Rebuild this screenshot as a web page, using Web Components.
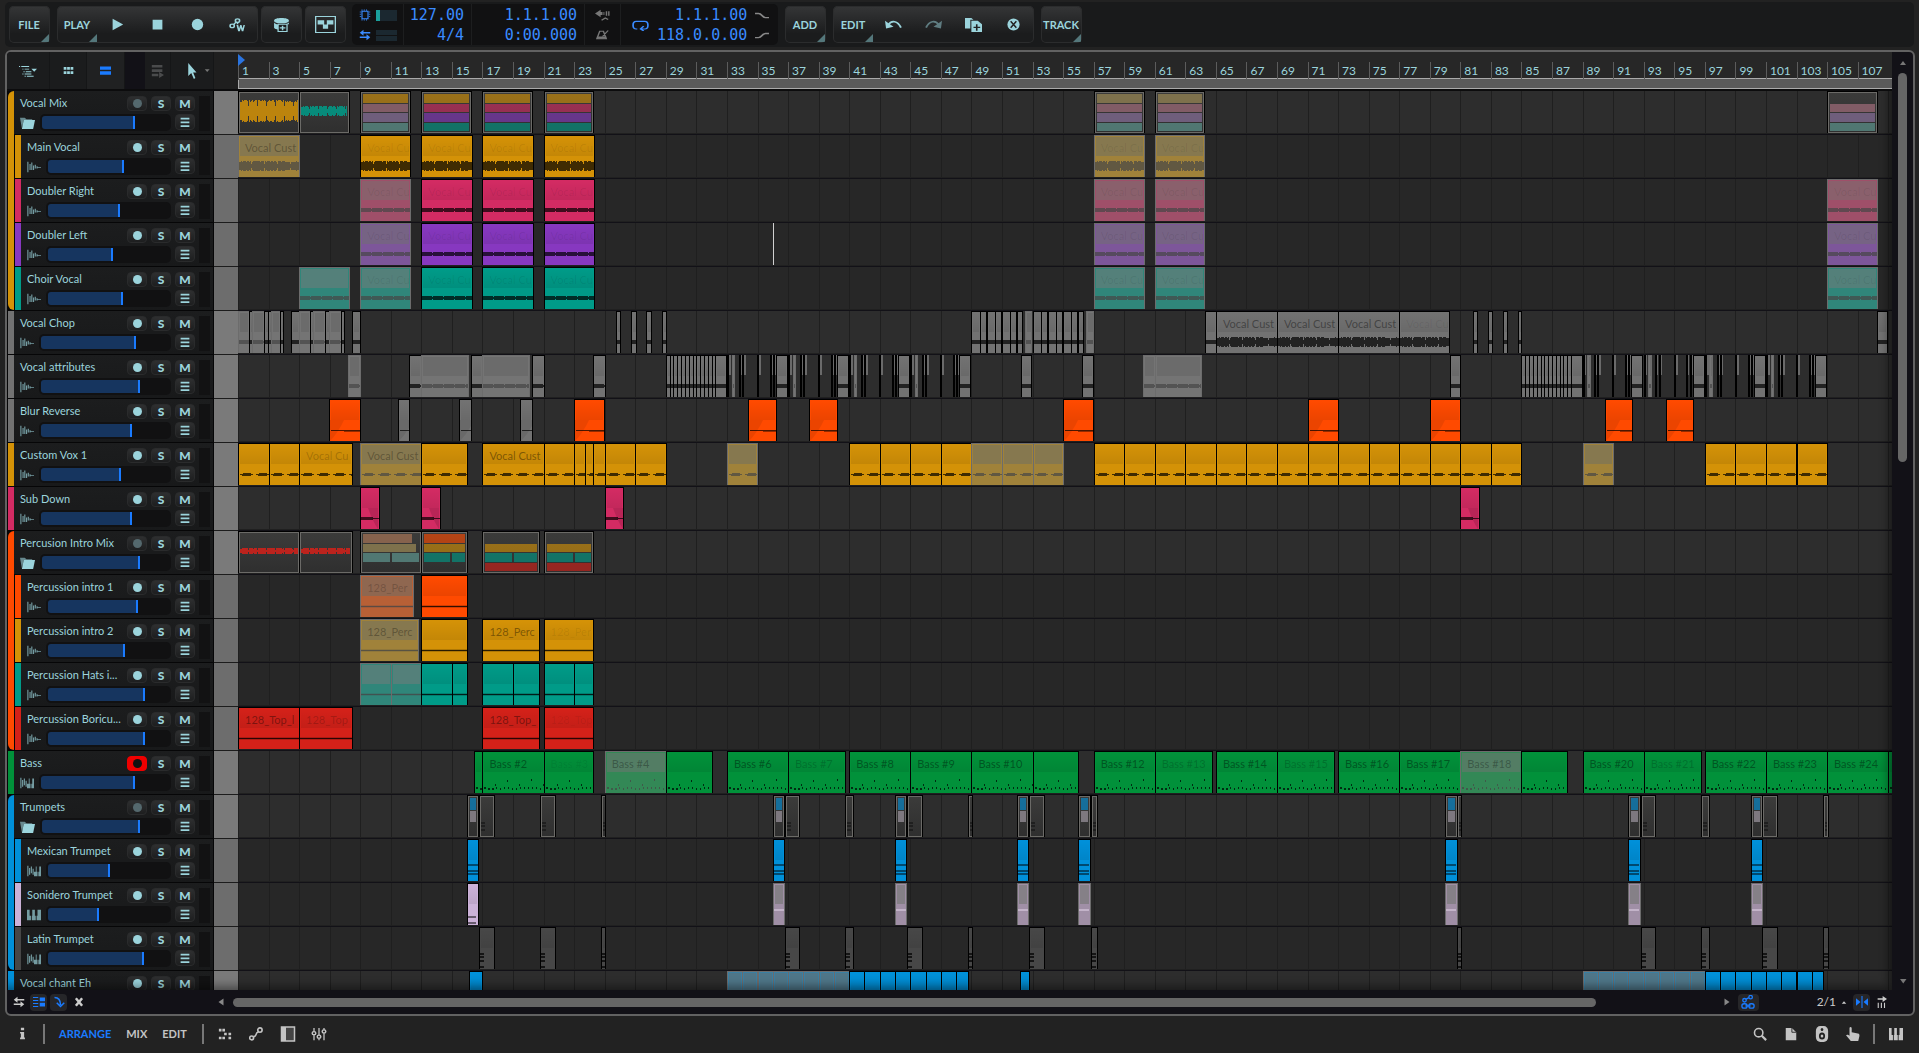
<!DOCTYPE html>
<html lang="en">
<head>
<meta charset="utf-8">
<title>Arranger</title>
<style>
  html, body {
    margin: 0;
    height: 100%;
    background: #222;
    overflow: hidden;
  }

  body {
    --accent: #1a7bff;
    --ink: #9bd4dc;
    --bars: 108.25;
    font: 12px/16px Lato, "Liberation Sans", sans-serif;
    color: var(--ink);
  }
</style>
</head>
<body>
<daw-app></daw-app>

<script>
const ICONS = {
  play: '<path d="M2 1l13 7-13 7z"/>',
  stop: '<path d="M2 2h12v12H2z"/>',
  record: '<circle cx="8" cy="8" r="7"/>',
  write: '<g fill="none" stroke="currentColor" stroke-width="1.500"><circle cx="3" cy="9" r="2"/><circle cx="8" cy="3" r="2"/><path d="M4.300 7.500l2.500-3M8 5v2"/></g><path d="M7 8h1.700l.8 4 1-4h1.300l1 4 .8-4H15l-1.500 7H12l-.9-3.500L10.200 15H8.600z"/>',
  preset: '<path d="M1 3c0-2 3-3 7-3s7 1 7 3-3 3-7 3-7-1-7-3zM1 5c1 2 3 2 4 2.500V13c-2 0-3.500-1-4-2zM15 5c-.5 1-2 1.500-3 2h3z"/><path d="M4.800 7.200h8.400v8.200H4.800z" fill="#1b1d1e" stroke="currentColor" stroke-width="1.200"/><path d="M8.300 8.800h1.400v1.900h2v1.300h-2v1.900H8.300V12h-2v-1.300h2z"/>',
  pattern: '<path d="M.5.500h15v15H.5z" fill="none" stroke="currentColor"/><path d="M2 4h5v4H2zM9 4h5v4H9zM6 8h4v4H6z"/>',
  chip: '<path d="M4 3h8v10H4z" fill="none" stroke="currentColor" stroke-width="1.500"/><path d="M4 .5v2M7 .5v2M10 .5v2M4 13.500v2M7 13.500v2M10 13.500v2M1 4h2M1 7h2M1 10h2M13 4h2M13 7h2M13 10h2" stroke="currentColor"/>',
  swap: '<path d="M6 1v3h9v2H6v3L1 5zM10 7v3H1v2h9v3l5-4z"/>',
  punch: '<path d="M6 1v3h2v4H6v3L0 6zM9 4h1v4H9zM11.500 3h1.500v6h-1.500zM14 3h1.500v6H14z"/><path d="M7 15l4-3 3 2" fill="none" stroke="currentColor" stroke-width="1.500"/>',
  metro: '<path d="M5 3h4l3 10H2zM8 10l6-8" fill="none" stroke="currentColor" stroke-width="1.500"/><path d="M2 10h10v3H2z"/>',
  loop: '<path d="M5 13H4C2 13 1 11 1 7.500S2 2 4 2h8c2 0 3 2 3 5.500S14 13 12 13H8M11 9l-3 4 3 3" fill="none" stroke="currentColor" stroke-width="1.600"/>',
  fadeOut: '<path d="M0 5h4c4 0 4 6 8 6h4" fill="none" stroke="currentColor" stroke-width="2"/>',
  fadeIn: '<path d="M0 11h4c4 0 4-6 8-6h4" fill="none" stroke="currentColor" stroke-width="2"/>',
  undo: '<path d="M3 8c3-6 9-5 12 3" fill="none" stroke="currentColor" stroke-width="1.800"/><path d="M0 3l1 9 7-2z"/>',
  redo: '<path d="M13 8C10 2 4 3 1 11" fill="none" stroke="currentColor" stroke-width="1.800"/><path d="M16 3l-1 9-7-2z"/>',
  duplicate: '<path d="M0 0h6l2 2H5v10H0z"/><path d="M6 3h6l4 4v9H6z"/><path d="M10.300 7v3H8v1.500h2.300v3h1.500v-3h2.500V10h-2.500V7z" fill="#222"/>',
  remove: '<circle cx="8" cy="8" r="7.500"/><path d="M4.500 4l7 8M11.500 4l-7 8" stroke="#222" stroke-width="1.800"/>',
  tree: '<path d="M0 2h9M3 5.500h6M4 9h7M3 12h8M5 15h8" stroke="currentColor" stroke-width="1.300" stroke-dasharray="1 1 20"/><path d="M11 5h5l-2.500 4z"/>',
  grid: '<path d="M1 3h4v4H1zM6 3h4v4H6zM11 3h4v4h-4zM1 9h4v4H1zM6 9h4v4H6zM11 9h4v4h-4z"/>',
  rows: '<path d="M0 2h16v5H0zM0 9h16v5H0z"/>',
  stack: '<path d="M1 1h13v3H1zM1 6h13v3H1zM1 11h8v3H1zM10 9l6 3.500-6 3.500z"/>',
  cursor: '<path d="M3 0l11 9.500H9.500l3 5.500-2 1-3.500-6-4 3z"/>',
  down: '<path d="M2 4h13l-6.500 9z"/>',
  up: '<path d="M2 12h12L8 4z"/>',
  left: '<path d="M13 1v14L3 8z"/>',
  right: '<path d="M3 1v14l10-7z"/>',
  folder: '<path d="M0 1h5l2 2h6v1H4L2 15z" opacity=".6"/><path d="M4 4h12l-2 12H2z"/>',
  audio: '<path d="M1 1v14M3.500 4v8M5.500 2v10M7.500 6v6M9.500 5v5M11.500 7v3M12 8.500h4" stroke="currentColor" stroke-width="1.300"/>',
  hybrid: '<path d="M1 1v14M3 4v9M5 2v9M7 5v8" stroke="currentColor" stroke-width="1.300"/><path d="M8 9h2V2h1v7h1v6H8zM13 15V9h1V2h2v13z"/>',
  keys: '<path d="M0 1h3v8h1.500v6H0zM5.500 15V9H6V1h3v8h1v6zM11 15V9h1V1h4v14z"/>',
  menu: '<path d="M1 1h14v3H1zM1 7h14v3H1zM1 13h14v3H1z"/>',
  tracks: '<path d="M0 2h7M0 6h7M0 10h7M0 14h7" stroke="currentColor" stroke-width="1.500"/><path d="M9 2h7v5H9zM9 9h7v5H9z"/>',
  follow: '<path d="M2 2c6 0 8 3 8 10M5 9l5 5 5-5" fill="none" stroke="currentColor" stroke-width="2"/>',
  close: '<path d="M3 2l10 12M13 2L3 14" stroke="currentColor" stroke-width="4"/>',
  link: '<g fill="none" stroke="currentColor" stroke-width="1.500"><circle cx="4" cy="6" r="2"/><circle cx="11" cy="2.500" r="2"/><path d="M5.500 5l3.500-2"/><rect x="1" y="10" width="6" height="5" rx="2.500"/><rect x="9" y="10" width="6" height="5" rx="2.500"/><path d="M5 12.500h6"/></g>',
  snap: '<path d="M8 0v16" stroke="currentColor" stroke-width="1.500"/><path d="M0 3l6 5-6 5zM16 3l-6 5 6 5z"/>',
  advance: '<path d="M1 3h8V0l7 4-7 4V5H1z"/><path d="M2 9v7M7 9v7M12 9v7" stroke="currentColor" stroke-width="1.800"/>',
  info: '<path d="M6 1h4v3H6zM5 6h5v7h1v2H5v-2h1V8H5z"/>',
  steps: '<path d="M1 2h3v3H1zM5 2h3v3H5zM7 6.500h3v3H7zM12 6.500h3v3h-3zM1 11h3v3H1zM5 11h3v3H5zM12 11h3v3h-3z"/>',
  curve: '<g fill="none" stroke="currentColor" stroke-width="1.800"><circle cx="3" cy="12.500" r="2.200"/><circle cx="12.500" cy="3.500" r="2.500"/><path d="M5 11c5 0 1-4 6-5.500"/></g>',
  device: '<path d="M1.500 1h13v14h-13z" fill="#444" stroke="currentColor" stroke-width="1.500"/><path d="M1 1h5v14H1z"/>',
  faders: '<path d="M3 1v14M8 1v14M13 1v14" stroke="currentColor" stroke-width="1.300"/><g fill="#222" stroke="currentColor" stroke-width="1.500"><circle cx="3" cy="7" r="1.800"/><circle cx="8" cy="11" r="1.800"/><circle cx="13" cy="5" r="1.800"/></g>',
  search: '<circle cx="6.500" cy="6.500" r="4.800" fill="none" stroke="currentColor" stroke-width="1.800"/><path d="M10 10l5 5" stroke="currentColor" stroke-width="2.500"/>',
  file: '<path d="M2 1h7l5 5v9H2z"/><path d="M9 1v5h5" fill="none" stroke="#222"/>',
  speaker: '<rect x="1" y="0" width="14" height="16" rx="5"/><circle cx="8" cy="10" r="3.500" fill="#222"/><circle cx="8" cy="10" r="1.500"/><circle cx="8" cy="3.500" r="1.500" fill="#222"/>',
  hand: '<path d="M5 0c1.500 0 1.500 1 1.500 2v4l7 1.500c2 .3 2 1.500 1.800 3L14 16H5.500L0 9.500C1 8 3 9 4 10V2c0-1 .3-2 1-2z"/>'
}

// Body, muted body and muted head of each track colour
const COLORS = {
  orange: ['#d49207', '#a0823a', '#86784f'],
  pink: ['#d32b63', '#9f4f69', '#8a606c'],
  purple: ['#8738c0', '#7d569a', '#766384'],
  teal: ['#009b88', '#30867a', '#54807a'],
  gray: ['#727272', '#747474', '#6b6b6b'],
  fire: ['#ff4a00', '#b86036', '#8f6750'],
  green: ['#01913a', '#338856', '#537d64'],
  red: ['#d42119', '#a04440', '#8a5a58'],
  blue: ['#0090d9', '#3a7fa3', '#4f7688'],
  lilac: ['#ccb2d8', '#a08fa6', '#858087'],
  dark: ['#474747', '#474747', '#3f3f3f']
}

// A clip is [start bar, end bar, label, flags]
// flags: m muted, f faint label, F barely visible label, g gray, t thin
const take = 'Vocal Cust'
const shortTake = 'Vocal Cu'
const doubled = [
  [9, 12.25, shortTake, 'mF'], [13, 16.3, shortTake, 'F'], [17, 20.3, shortTake, 'F'], [21, 24.3, shortTake, 'F'],
  [57, 60.3, shortTake, 'mF'], [61, 64.25, shortTake, 'mF'], [105, 108.25, shortTake, 'mF']
]

const every = (from, to, step, flags = '') => {
  const clips = []
  for (let bar = from; bar < to; bar += step) {
    clips.push([bar, Math.min(bar + step, to), '', flags])
  }
  return clips
}

const shift = (starts, pattern) =>
  starts.flatMap(at => pattern.map(([a, b, ...rest]) => [at + a, at + b, ...rest]))

const stutter = shift([33, 37, 41, 45, 89, 93, 97, 101], [
  [0, .18, '', 't'], [.3, .46, '', 'm'], [.77, .9, '', 't'], [.97, 1.15, '', 't'],
  [1.95, 2.15, '', 't'], [2.8, 2.93, '', 't'], [3, 3.15, '', 't'], [3.2, 3.92]
])

const trumpetHits = [
  [16, 16.7], [36, 36.75, '', 'm'], [44, 44.75, '', 'm'], [52, 52.7, '', 'm'], [56, 56.75, '', 'm'],
  [80, 80.75, '', 'm'], [92, 92.75, '', 'm'], [100, 100.75, '', 'm']
]

const latinHits = [
  [16.75, 17.75], [20.75, 21.75], [24.77, 25.03], [36.77, 37.73], [40.75, 41.27], [44.77, 45.75],
  [48.77, 49.03], [52.75, 53.75], [56.8, 57.25], [80.77, 81.07], [92.8, 93.75], [96.75, 97.25],
  [100.77, 101.75], [104.75, 105.03]
]

const vocalTiles = ['orange', 'pink', 'purple', 'teal']

const TRACKS = [
  { name: 'Vocal Mix', color: 'orange', group: 'start', icon: 'folder', level: 73, clips: [
    { at: [1, 5], wave: 'orange', amp: 11 }, { at: [5, 8.25], wave: 'teal', amp: 5 },
    { at: [9, 12.25], tiles: ['orange', 'pink m', 'purple m', 'teal m'] },
    { at: [13, 16.25], tiles: vocalTiles }, { at: [17, 20.25], tiles: vocalTiles }, { at: [21, 24.25], tiles: vocalTiles },
    { at: [57, 60.3], tiles: vocalTiles.map(c => c + ' m') }, { at: [61, 64.25], tiles: vocalTiles.map(c => c + ' m') },
    { at: [105, 108.25], tiles: ['', 'pink m', 'purple m', 'teal m'] }
  ] },
  { name: 'Main Vocal', color: 'orange', parent: 'orange', level: 62, content: 'loud', clips: [
    [1, 5, take, 'm'], [9, 12.25, shortTake, 'F'], ...doubled.slice(1, -1)
  ] },
  { name: 'Doubler Right', color: 'pink', parent: 'orange', level: 59, clips: doubled },
  { name: 'Doubler Left', color: 'purple', parent: 'orange', level: 53, playhead: 36, clips: doubled },
  { name: 'Choir Vocal', color: 'teal', parent: 'orange', group: 'end', level: 61, clips: [[5, 8.25, '', 'm'], ...doubled] },
  { name: 'Vocal Chop', color: 'gray', level: 74, clips: [
    [1, 1.72, '', 'm'], [1.72, 1.92], [1.92, 2.7, '', 'm'], [2.7, 2.97], [2.97, 3.18], [3.18, 3.75, '', 'm'], [3.75, 3.97],
    [4.47, 5], [5, 5.72, '', 'm'], [5.72, 5.93], [5.93, 6.72, '', 'm'], [6.72, 6.94], [6.94, 7.75, '', 'm'], [7.75, 7.97], [8.47, 9],
    [25.75, 26.03], [26.75, 27.03], [27.73, 28.03], [28.77, 29],
    ...shift([49, 53], [[0, .55], [.55, .95], [1, 1.53], [1.53, 1.95], [2, 2.5], [2.5, 2.9], [3, 3.3], [3.5, 3.93, '', 'm']]),
    [64.28, 65], [65, 69, take], [69, 73, take], [73, 77, take], [77, 80.25, shortTake, 'F'],
    [81.8, 82.08], [82.8, 83.08], [83.8, 84.07], [84.8, 85], [108.3, 108.9]
  ], content: 'mid', loud: [65, 80] },
  { name: 'Vocal attributes', color: 'gray', level: 77, content: 'mid', clips: [
    [8.2, 9, '', 'm'], [12.2, 13], [13, 16.05, '', 'm'], [16.26, 17], [17, 20.05, '', 'm'], [20.26, 21], [24.26, 25],
    ...every(29, 32.25, .25), [32.25, 32.92], ...stutter,
    [52.26, 52.92], [56.27, 56.95], [60.25, 61, '', 'm'], [61, 64, '', 'm'], [80.3, 81],
    ...every(85, 88.25, .25), [88.25, 88.95]
  ] },
  { name: 'Blur Reverse', color: 'fire', strip: 'gray', level: 71, content: 'rise', clips: [
    [6.95, 9], [11.46, 12.2, '', 'g'], [15.46, 16.25, '', 'g'], [19.46, 20.25, '', 'g'], [23, 24.95], [34.4, 36.2], [38.4, 40.2],
    [55, 56.95], [71, 73], [79, 81], [90.45, 92.25], [94.45, 96.25]
  ] },
  { name: 'Custom Vox 1', color: 'orange', level: 62, content: 'dash', clips: [
    [1, 3], [3, 5], [5, 8.45, shortTake, 'f'], [9, 13, take, 'm'], [13, 16], [17, 21, take], [21, 23], [23, 23.7], [23.7, 24.25], [24.25, 25],
    [25, 27], [27, 29], [33, 35, '', 'm'], ...every(41, 49, 2), ...every(49, 55, 2, 'm'), ...every(57, 85, 2), [89, 91, '', 'm'],
    ...every(97, 105, 2)
  ] },
  { name: 'Sub Down', color: 'pink', level: 71, content: 'fall', clips: [[9, 10.25], [13, 14.25], [25, 26.2], [81, 82.25]] },
  { name: 'Percusion Intro Mix', color: 'fire', group: 'start', icon: 'folder', level: 77, clips: [
    { at: [1, 5], wave: 'red', amp: 3 }, { at: [5, 8.45], wave: 'red', amp: 3 },
    { at: [9, 13], tiles: ['fire m 87', 'orange m 94', 'teal m 48,50', ''] },
    { at: [13, 16], tiles: ['fire', 'orange', 'teal 66,34', ''] },
    { at: [17, 20.7], tiles: ['', 'orange', 'teal 54,46', 'red'] },
    { at: [21, 24.25], tiles: ['', 'orange', 'teal 61,39', 'red'] }
  ] },
  { name: 'Percussion intro 1', color: 'fire', parent: 'fire', level: 74, content: 'line', clips: [[9, 12.45, '128_Per', 'mf'], [13, 16]] },
  { name: 'Percussion intro 2', color: 'orange', parent: 'fire', level: 63, content: 'line', clips: [
    [9, 12.75, '128_Perc', 'm'], [13, 16], [17, 20.7, '128_Perc'], [21, 24.25, '128_Per', 'F']
  ] },
  { name: 'Percussion Hats i...', color: 'teal', parent: 'fire', level: 80, content: 'line', clips: [
    [9, 11, '', 'm'], [11, 13, '', 'm'], [13, 15], [15, 16], [17, 19], [19, 20.7], [21, 23], [23, 24.25]
  ] },
  { name: 'Percussion Boricu...', color: 'red', parent: 'fire', group: 'end', level: 80, content: 'line', clips: [
    [1, 5, '128_Top_l'], [5, 8.45, '128_Top', 'f'], [17, 20.7, '128_Top_'], [21, 24.25, '128_Top', 'F']
  ] },
  { name: 'Bass', color: 'green', icon: 'hybrid', armed: true, level: 73, content: 'notes', clips: [
    [16.46, 17], [17, 21, 'Bass #2'], [21, 24.25, 'Bass #3', 'F'], [25, 29, 'Bass #4', 'm'], [29, 32],
    [33, 37, 'Bass #6'], [37, 40.75, 'Bass #7', 'f'], [41, 45, 'Bass #8'], [45, 49, 'Bass #9'], [49, 53, 'Bass #10'], [53, 56],
    [57, 61, 'Bass #12'], [61, 64.75, 'Bass #13', 'f'], [65, 69, 'Bass #14'], [69, 72.75, 'Bass #15', 'f'], [73, 77, 'Bass #16'],
    [77, 81, 'Bass #17'], [81, 85, 'Bass #18', 'm'], [85, 88], [89, 93, 'Bass #20'], [93, 96.75, 'Bass #21', 'f'],
    [97, 101, 'Bass #22'], [101, 105, 'Bass #23'], [105, 109, 'Bass #24'], [109, 109.3]
  ] },
  { name: 'Trumpets', color: 'blue', group: 'start', icon: 'folder', level: 77, clips: [
    ...trumpetHits.map(([a, b]) => ({ at: [a, b], tiles: ['blue', 'lilac m', ''] })),
    ...latinHits.map(([a, b]) => ({ at: [a, b], hits: true }))
  ] },
  { name: 'Mexican Trumpet', color: 'blue', parent: 'blue', icon: 'hybrid', level: 50, content: 'chord', clips: trumpetHits.map(c => c.slice(0, 2)) },
  { name: 'Sonidero Trumpet', color: 'lilac', parent: 'blue', icon: 'keys', level: 41, content: 'stab', clips: trumpetHits },
  { name: 'Latin Trumpet', color: 'dark', parent: 'blue', group: 'end', icon: 'hybrid', level: 79, content: 'hits', clips: latinHits },
  { name: 'Vocal chant Eh', color: 'blue', level: 70, content: 'line', clips: [
    [16.15, 17], ...every(33, 41, 1, 'm'), ...every(41, 48.75, 1), [52.15, 52.75], ...every(89, 97, 1, 'm'), ...every(97, 104.75, 1)
  ] }
]

class DawElement extends HTMLElement {
  constructor() {
    super()
    this.attachShadow({ mode: 'open' })
  }

  paint(css, html) {
    this.shadowRoot.innerHTML = `<style>*{box-sizing:border-box}button{font:inherit;color:inherit;margin:0;padding:0;border:0;background:none}${css}</style>${html}`
  }
}

class UiIcon extends DawElement {
  connectedCallback() {
    this.paint(`
      :host { display: inline-flex; width: 12px; height: 12px; flex: none; }
      svg { display: block; width: 100%; height: 100%; fill: currentColor; }
    `, `<svg viewBox="0 0 16 16" preserveAspectRatio="none" aria-hidden="true">${ICONS[this.getAttribute('name')]}</svg>`)
  }
}

class ToolGroup extends DawElement {
  connectedCallback() {
    this.paint(`
      :host {
        display: flex;
        padding-right: 1px;
        border-radius: 5px;
        background: linear-gradient(#353637, #1b1c1d 75%);
        box-shadow: inset 0 0 0 1px #2b2c2d;
        overflow: hidden;
      }
      ::slotted(* + *) { border-left: 1px solid #2f3031; }
    `, '<slot></slot>')
  }
}

class ToolButton extends DawElement {
  connectedCallback() {
    this.paint(`
      :host { display: block; width: 40px; height: 37px; flex: none; box-sizing: border-box; }
      :host([off]) { opacity: .5; }
      button {
        position: relative;
        display: grid;
        place-items: center;
        width: 100%;
        height: 100%;
        font-size: 11px;
        font-weight: 700;
      }
      :host([more]) button::after {
        content: "";
        position: absolute;
        right: 0;
        bottom: 1px;
        border: 4px solid #54777b;
        border-top-color: transparent;
        border-left-color: transparent;
      }
    `, `<button aria-label="${this.getAttribute('label') || this.textContent}"><slot></slot></button>`)
  }
}

class TransportDisplay extends DawElement {
  connectedCallback() {
    this.paint(`
      :host {
        display: flex;
        height: 41px;
        background: #111112;
        border-radius: 5px;
        color: #3a8bff;
        font: 15px/20px "DejaVu Sans Mono", monospace;
      }
      div { display: grid; grid-template-rows: 20px 20px; align-items: center; justify-items: end; padding-top: 1px; }
      div + div { border-left: 1px solid #1d1e1f; }
      .meters { width: 51px; grid-template-columns: 12px 21px; gap: 0 5px; justify-content: center; }
      .meters i { width: 21px; height: 11px; background: linear-gradient(90deg, #1aa09c 4px, #1b2830 4px); }
      .meters i + ui-icon + i { background: linear-gradient(#1b2830 5px, #111112 5px 6px, #1b2830 6px); }
      .tempo { width: 68px; padding-right: 7px; }
      .time { width: 113px; padding-right: 7px; }
      .flags { width: 36px; justify-items: center; color: #777; }
      .flags ui-icon { width: 15px; }
      .loop { width: 158px; padding: 1px 12px 0 11px; grid-template-columns: 17px 1fr 14px; gap: 0 8px; }
      .loop ui-icon { width: 14px; height: 11px; color: #888; }
      .loop ui-icon:first-child { grid-row: span 2; width: 17px; height: 11px; color: #3a8bff; }
    `, `
      <div class="meters"><ui-icon name="chip"></ui-icon><i></i><ui-icon name="swap"></ui-icon><i></i></div>
      <div class="tempo"><span>127.00</span><span>4/4</span></div>
      <div class="time"><span>1.1.1.00</span><span>0:00.000</span></div>
      <div class="flags"><ui-icon name="punch"></ui-icon><ui-icon name="metro"></ui-icon></div>
      <div class="loop">
        <ui-icon name="loop"></ui-icon><span>1.1.1.00</span><ui-icon name="fadeOut"></ui-icon>
        <span>118.0.0.00</span><ui-icon name="fadeIn"></ui-icon>
      </div>
    `)
  }
}

class TransportBar extends DawElement {
  connectedCallback() {
    this.paint(`
      :host {
        display: flex;
        align-items: center;
        height: 45px;
        margin: 2px 5px 3px;
        padding: 0 4px;
        background: #191a1b;
        border-radius: 5px;
      }
      transport-display { margin: 0 7px 0 6px; }
      .gap { margin-left: 7px; }
      .near { margin-left: 3px; }
      ui-icon { width: 13px; height: 13px; }
      .wide { width: 17px; height: 14px; }
      .box { width: 21px; height: 17px; }
    `, `
      <tool-group><tool-button more>FILE</tool-button></tool-group>
      <tool-group class="gap">
        <tool-button more>PLAY</tool-button>
        <tool-button label="Play"><ui-icon name="play"></ui-icon></tool-button>
        <tool-button label="Stop"><ui-icon name="stop"></ui-icon></tool-button>
        <tool-button label="Record"><ui-icon name="record"></ui-icon></tool-button>
        <tool-button label="Write automation"><ui-icon name="write" class="wide"></ui-icon></tool-button>
      </tool-group>
      <tool-group class="near"><tool-button label="Add device"><ui-icon name="preset" class="wide"></ui-icon></tool-button></tool-group>
      <tool-group class="near"><tool-button label="Patterns"><ui-icon name="pattern" class="box"></ui-icon></tool-button></tool-group>
      <transport-display></transport-display>
      <tool-group><tool-button more>ADD</tool-button></tool-group>
      <tool-group class="gap">
        <tool-button more>EDIT</tool-button>
        <tool-button label="Undo"><ui-icon name="undo" class="wide"></ui-icon></tool-button>
        <tool-button label="Redo" off><ui-icon name="redo" class="wide"></ui-icon></tool-button>
        <tool-button label="Duplicate"><ui-icon name="duplicate" class="wide"></ui-icon></tool-button>
        <tool-button label="Delete"><ui-icon name="remove"></ui-icon></tool-button>
      </tool-group>
      <tool-group class="gap"><tool-button more>TRACK</tool-button></tool-group>
    `)
  }
}

class TimeRuler extends DawElement {
  connectedCallback() {
    const marks = Array.from({ length: 54 }, (_, i) => `<span>${i * 2 + 1}</span>`).join('')

    this.paint(`
      :host { display: block; background: #272727; overflow: hidden; }
      .marks {
        position: relative;
        display: grid;
        grid-template-columns: repeat(54, 2fr) .25fr;
        height: 26px;
        padding-top: 10px;
      }
      .marks span { min-width: 0; padding-left: 3px; border-left: 1px solid #5c5c5c; line-height: 18px; }
      .marks::after {
        content: "";
        position: absolute;
        left: 0;
        top: 2px;
        border: 6px solid transparent;
        border-left: 7px solid #2a74e0;
        border-right: 0;
      }
      .loop { height: 11px; background: #5a5a5a; border: 1px solid #aaa; border-right: 0; }
    `, `<div class="marks">${marks}</div><div class="loop"></div>`)
  }
}

class TrackHeader extends DawElement {
  set track(t) {
    const strip = COLORS[t.strip || t.color][0]
    const kind = t.icon || 'audio'
    const base = t.icon === 'folder' ? 'folder' : ''

    this.paint(`
      :host { display: flex; width: 207px; height: 44px; flex: none; padding-left: 1px; background: #060607; box-sizing: border-box; }
      .strip { width: 6px; margin-bottom: 1px; background: ${strip}; flex: none; }
      .outer { width: 6px; margin-right: 1px; background: ${t.parent ? COLORS[t.parent][0] : strip}; flex: none; }
      .start { margin: 0; border-top-left-radius: 6px; }
      .end { border-bottom-left-radius: 6px; margin-bottom: 1px; }
      .body {
        display: grid;
        grid-template: 15px 17px / minmax(0, 1fr) 20px 20px 20px 11px;
        gap: 3px 4px;
        flex: 1;
        min-width: 0;
        margin: 0 1px 1px 0;
        padding: 5px 3px 3px 6px;
        background: linear-gradient(#1c1d1e, #18191a);
      }
      .name { font-size: 11px; line-height: 13px; white-space: nowrap; }
      button {
        display: grid;
        place-items: center;
        height: 15px;
        border: 1px solid #2a2b2c;
        border-radius: 4px;
        background: linear-gradient(#2e2f30, #1d1e1f);
        font-weight: 900;
        line-height: 13px;
      }
      .arm::before { content: ""; width: 9px; height: 9px; border-radius: 50%; background: var(--ink); }
      .folder .arm::before { background: #54686d; }
      .armed { background: #ee0000; border-color: #ee0000; }
      .armed::before { background: #111; }
      .fader { grid-column: 1 / 4; display: flex; align-items: center; gap: 5px; }
      .fader ui-icon { width: 15px; height: 12px; }
      :not(.folder) > .fader ui-icon { width: 14px; opacity: .7; }
      .menu { height: 16px; }
      .menu ui-icon { width: 10px; height: 10px; }
      .meter { grid-row: 1 / 3; grid-column: 5; background: #121213; }
      input {
        appearance: none;
        flex: 1;
        min-width: 0;
        height: 17px;
        margin: 0;
        padding: 2px;
        border-radius: 5px;
        background: #111112;
      }
      input::-webkit-slider-runnable-track {
        height: 13px;
        border-radius: 3px;
        background: linear-gradient(90deg, #16355f ${t.level}%, transparent ${t.level}%);
      }
      input::-webkit-slider-thumb { appearance: none; width: 2px; height: 13px; background: var(--accent); }
    `, `
      ${t.parent || t.group ? `<i class="outer ${t.group || ''}"></i>` : ''}
      ${t.parent || !t.group ? '<i class="strip"></i>' : ''}
      <div class="body ${base}">
        <span class="name">${t.name}</span>
        <button class="arm ${t.armed ? 'armed' : ''}" aria-label="Arm ${t.name}"></button>
        <button aria-label="Solo ${t.name}">S</button>
        <button aria-label="Mute ${t.name}">M</button>
        <i class="meter"></i>
        <div class="fader">
          <ui-icon name="${kind}"></ui-icon>
          <input type="range" min="0" max="100" value="${t.level}" aria-label="${t.name} volume">
        </div>
        <button class="menu" aria-label="${t.name} menu"><ui-icon name="menu"></ui-icon></button>
      </div>
    `)
  }
}

// Repeatable noise, so that equal clips get equal waveforms
const noise = n => {
  let h = Math.imul(n + 11, 2654435761)
  h = Math.imul(h ^ (h >>> 15), 2246822519)
  return ((h ^ (h >>> 13)) >>> 0) / 4294967296
}

const wavePath = (length, mid, amp, skip = () => false) => {
  let d = ''
  for (let x = 0; x < length; x++) {
    const h = Math.max(1, Math.round(amp * (skip(x) ? .45 : .8 + noise(x) * .25)))
    d += `M${x + .5} ${mid - h}v${h * 2}`
  }
  return d
}

const dashPath = length => {
  let d = 'M0 0'
  for (let x = 1; x < length; x += 16) d += `M${x} 30.500h13M${x + 3} 29.500h8M${x + 2} 31.500h9`
  return d
}

const CONTENT = {
  loud: w => `<path d="${wavePath(w, 30, 5, x => x % 13 === 12)}"/>`,
  mid: w => `<path d="${wavePath(w, 30, 2, x => x % 11 === 10)}"/>`,
  dash: w => `<path d="${dashPath(w)}"/>`,
  line: w => `<path d="M0 30.500h${w}"/><path opacity=".5" d="${wavePath(w, 30.5, 1, () => false)}" stroke-dasharray="2 5"/>`,
  rise: w => `<path d="M1 30.500h${w}"/><path opacity=".6" d="M14 31.500h${w}"/><path d="M0 41q8-8 14-21H0z" fill="#000" stroke="none" opacity=".08"/>`,
  fall: w => `<path d="M0 30.500h${w}M0 29.500h12M0 31.500h12"/><path d="M7 20q5 14 10 21V20z" fill="#000" stroke="none" opacity=".12"/>`,
  notes: w => {
    let d = ''
    for (let x = 1; x < w; x += 4) {
      d += `M${x} ${noise(x) > .8 ? 37 : 36}h${x < 12 ? 2 : 1}`
      if (x % 12 === 1) d += `M${x + 11} ${[33, 29, 33, 28][(x - 1) / 12 % 4]}h1`
    }
    return `<path stroke-width="2" d="${d}"/>`
  },
  chord: () => '<path stroke-width="2" opacity=".7" d="M0 25h10M0 31h10M0 34h10"/>',
  stab: () => '<path stroke-width="2" opacity=".7" d="M0 33h8M0 39h8"/>',
  light: () => '<path stroke-width="2" style="stroke:#c3b3c9" d="M0 26h10"/>',
  hits: () => '<path stroke-width="2" d="M0 26h4M0 29h4M0 33h4M0 39h4"/>'
}

class TrackLane extends DawElement {
  span([start, end]) {
    return `left:calc(100% * ${start - 1} / var(--bars));width:calc(100% * ${+(end - start).toFixed(3)} / var(--bars) + 1px)`
  }

  folderClip(clip) {
    const width = Math.ceil((clip.at[1] - clip.at[0]) * 15.27)
    let inner = ''

    if (clip.wave) {
      inner = `<svg style="color:${COLORS[clip.wave][0]}"><path d="${wavePath(width - 4, 18, clip.amp, x => x % 9 === 8)}"/></svg>`
    } else if (clip.hits) {
      inner = '<svg class="dark">' + CONTENT.hits() + '</svg>'
    } else {
      inner = clip.tiles.map(tile => {
        const [color, ...opts] = tile.split(' ')
        const sizes = (opts.find(o => /\d/.test(o)) || '100').split(',')
        const muted = opts.includes('m')
        return `<p>${color ? sizes.map(s => `<b style="width:${s}%;background:${COLORS[color][muted ? 2 : 0]}" class="${muted ? 'pale' : ''}"></b>`).join('') : ''}</p>`
      }).join('')
    }

    return `<div class="folder" style="${this.span(clip.at)}"><div>${inner}</div></div>`
  }

  clip(clip, t) {
    const [start, end, label = '', flags = ''] = clip
    const palette = COLORS[flags.includes('g') ? 'gray' : t.color]
    const muted = flags.includes('m')
    const width = Math.ceil((end - start) * 16)
    const loud = t.loud && start >= t.loud[0] && start < t.loud[1]
    const content = muted && t.content === 'stab' ? 'light' : t.content || 'mid'
    const draw = CONTENT[loud ? 'loud' : content]
    const tone = flags.includes('F') ? 'ghost' : flags.includes('f') ? 'faint' : ''

    return `<div class="clip ${muted ? 'muted' : ''} ${flags.includes('t') ? 'thin' : ''}" style="${this.span(clip)};--fill:${palette[muted ? 1 : 0]};--head:${muted ? palette[2] : 'rgba(0,0,0,.08)'}">
      <div class="head">${label ? `<span class="${tone}">${label}</span>` : ''}</div><svg>${draw(width)}</svg></div>`
  }

  set track(t) {
    const clips = t.clips.map(c => Array.isArray(c) ? this.clip(c, t) : this.folderClip(c)).join('')
    const cells = '<i></i>'.repeat(55)

    this.paint(`
      :host {
        position: relative;
        display: block;
        flex: 1;
        min-width: 0;
        height: 43px;
        background: ${t.parent ? '#272727' : '#2d2d2d'};
        border-bottom: 1px solid #202020;
        overflow: hidden;
      }
      .cells { display: grid; grid-template-columns: repeat(54, 2fr) .25fr; height: 100%; }
      .cells i { border-left: 1px solid #1f1f1f; }
      .clip, .folder { position: absolute; top: 0; height: 43px; overflow: hidden; border: 1px solid #000; }
      .clip { background: var(--fill); }
      .muted { border-color: #6c6c6c; }
      .thin { background: linear-gradient(#6a6a6a 20px, #2d2d2d 20px); border-width: 0 0 0 2px; }
      .thin * { display: none; }
      .head {
        height: 19px;
        margin: 1px 1px 0;
        padding: 3px 0 0 5px;
        background: linear-gradient(transparent, var(--head));
      }
      .muted .head { background: var(--head); }
      .head span { display: block; color: rgba(0, 0, 0, .4); font-size: 11px; line-height: 16px; white-space: nowrap; }
      .muted .head span { color: rgba(0, 0, 0, .3); }
      .head .faint, .muted .head .faint { color: rgba(0, 0, 0, .2); }
      .head .ghost, .muted .head .ghost { color: rgba(0, 0, 0, .08); }
      svg { position: absolute; inset: 0; width: 100%; height: 41px; fill: none; stroke: rgba(0, 0, 0, .7); }
      .muted svg { stroke: rgba(70, 70, 70, .7); }
      .folder { background: #6b6a67; padding: 1px; }
      .folder > div {
        position: relative;
        display: grid;
        grid-auto-rows: 1fr;
        gap: 1px;
        height: 100%;
        padding: 1px;
        background: linear-gradient(#3b3b3a, #2f2f2f);
        overflow: hidden;
      }
      .folder p { display: flex; gap: 2px; margin: 0; min-height: 0; }
      .folder b { opacity: .62; }
      .folder .pale { opacity: .9; }
      .folder svg { stroke: currentColor; opacity: .85; height: 37px; }
      .folder .dark { color: #1c1c1c; }
      .playhead { position: absolute; top: 0; width: 1px; height: 43px; background: #d0d0d0; }
    `, `<div class="cells">${cells}</div>${clips}
      ${t.playhead ? `<i class="playhead" style="left:calc(100% * ${t.playhead - 1} / var(--bars))"></i>` : ''}`)
  }
}

class TrackRow extends DawElement {
  set track(t) {
    this.paint(`
      :host { display: flex; height: 44px; flex: none; }
      .launch { width: 24px; height: 43px; flex: none; background: ${t.parent ? '#6d6d6d' : '#7a7a7a'}; border-bottom: 1px solid #1c1c1c; box-sizing: content-box; }
    `, '<track-header></track-header><div class="launch"></div><track-lane></track-lane>')
    this.shadowRoot.querySelector('track-header').track = t
    this.shadowRoot.querySelector('track-lane').track = t
  }
}

class ArrangerView extends DawElement {
  connectedCallback() {
    this.paint(`
      :host {
        display: grid;
        grid-template: 39px minmax(0, 1fr) 24px / minmax(0, 1fr) 21px;
        flex: 1;
        min-height: 0;
        margin: 0 4px 0 5px;
        border: 2px solid #626262;
        border-radius: 6px;
        background: #121117;
        overflow: hidden;
      }
      .top { display: flex; border-bottom: 2px solid #0c0c0d; }
      .top button { display: flex; align-items: center; justify-content: center; height: 37px; background: #1b1c1d; border-right: 1px solid #151617; }
      .top ui-icon { width: 11px; height: 11px; }
      .top .tree { width: 43px; }
      .tree ui-icon { width: 18px; height: 12px; }
      .top .grid { width: 37px; }
      .top .rows { width: 38px; background: #202122; color: var(--accent); }
      .top .stack { width: 26px; margin-left: 20px; color: #4a4b4c; }
      .top .stack ui-icon { width: 13px; height: 14px; }
      .top .pointer { width: 43px; gap: 6px; padding-left: 12px; }
      .top .pointer ui-icon { width: 12px; height: 16px; }
      .top .pointer ui-icon + ui-icon { width: 6px; height: 5px; color: #777; }
      .corner { width: 24px; background: #1f1f1f; }
      time-ruler { flex: 1; min-width: 0; }
      .tracks { position: relative; overflow: hidden; }
      .tracks::after {
        content: "";
        position: absolute;
        inset: 0;
        box-shadow: inset -8px -8px 8px -4px rgba(0, 0, 0, .4);
        pointer-events: none;
      }
      .vscroll { grid-row: 1 / 4; grid-column: 2; display: flex; flex-direction: column; align-items: center; padding: 7px 0 29px; color: #777; }
      .vscroll ui-icon { width: 8px; height: 8px; }
      .vscroll i { width: 9px; height: 42%; margin: 6px 0 auto; border-radius: 5px; background: #666; }
      .bottom { grid-row: 3; grid-column: 1 / 3; display: flex; align-items: center; color: #ccc; }
      .bottom button { display: grid; place-items: center; height: 17px; width: 17px; margin-right: 3px; border-radius: 4px; }
      .bottom .on { background: #262629; color: var(--accent); }
      .bottom .first { margin-left: 3px; }
      .hscroll { flex: 1; display: flex; align-items: center; margin: 0 7px 0 127px; gap: 8px; color: #888; }
      .hscroll ui-icon { width: 8px; height: 8px; }
      .hscroll div { flex: 1; }
      .hscroll i { display: block; width: 92%; height: 9px; border-radius: 5px; background: #666; }
      .bottom .chain { width: 21px; margin-right: 58px; }
      .bottom .snap { margin: 0 7px 0 6px; }
      .bottom .ahead { width: 10px; margin-right: 26px; }
      .bottom .ahead ui-icon { width: 10px; }
      .bottom > ui-icon { width: 6px; height: 5px; margin-left: 5px; }
    `, `
      <div class="top">
        <button class="tree" aria-label="Track list"><ui-icon name="tree"></ui-icon></button>
        <button class="grid" aria-label="Launcher"><ui-icon name="grid"></ui-icon></button>
        <button class="rows" aria-label="Timeline"><ui-icon name="rows"></ui-icon></button>
        <button class="stack" aria-label="Return to arrangement"><ui-icon name="stack"></ui-icon></button>
        <button class="pointer" aria-label="Pointer tool"><ui-icon name="cursor"></ui-icon><ui-icon name="down"></ui-icon></button>
        <div class="corner"></div>
        <time-ruler></time-ruler>
      </div>
      <div class="tracks"></div>
      <div class="vscroll"><ui-icon name="up"></ui-icon><i></i><ui-icon name="down"></ui-icon></div>
      <div class="bottom">
        <button class="first" aria-label="Track I/O"><ui-icon name="swap"></ui-icon></button>
        <button class="on" aria-label="Track height"><ui-icon name="tracks"></ui-icon></button>
        <button class="on" aria-label="Follow"><ui-icon name="follow"></ui-icon></button>
        <button aria-label="Crossfade"><ui-icon name="close" style="width:10px;height:10px"></ui-icon></button>
        <div class="hscroll"><ui-icon name="left"></ui-icon><div><i></i></div><ui-icon name="right"></ui-icon></div>
        <button class="on chain" aria-label="Automation follows"><ui-icon name="link" style="width:14px;height:14px"></ui-icon></button>
        <span>2/1</span><ui-icon name="up"></ui-icon>
        <button class="on snap" aria-label="Snap"><ui-icon name="snap"></ui-icon></button>
        <button class="ahead" aria-label="Advance"><ui-icon name="advance"></ui-icon></button>
      </div>
    `)

    const list = this.shadowRoot.querySelector('.tracks')
    for (const track of TRACKS) {
      const row = document.createElement('track-row')
      row.track = track
      list.append(row)
    }
  }
}

class StatusBar extends DawElement {
  connectedCallback() {
    this.paint(`
      :host {
        display: flex;
        align-items: center;
        box-sizing: border-box;
        height: 37px;
        padding: 0 16px 2px;
        color: #c4c4c4;
        font-size: 11px;
        font-weight: 700;
      }
      button { display: grid; place-items: center; margin-right: 15px; }
      .on { color: var(--accent); }
      hr { width: 2px; height: 20px; margin: 0 14px 0 0; border: 0; background: #777; }
      ui-icon { width: 14px; height: 14px; }
      .tools { margin-right: 16px; width: 15px; }
      .first { width: 13px; margin-right: 14px; }
      .space { flex: 1; }
      .right { width: 13px; margin-right: 18px; }
      .hand { width: 13px; margin-right: 14px; }
      .last { margin: 0; }
    `, `
      <button class="first" aria-label="Info"><ui-icon name="info" style="width:13px;height:13px"></ui-icon></button>
      <hr>
      <button class="on">ARRANGE</button><button>MIX</button><button>EDIT</button>
      <hr>
      <button class="tools" aria-label="Detail"><ui-icon name="steps"></ui-icon></button>
      <button class="tools" aria-label="Automation"><ui-icon name="curve"></ui-icon></button>
      <button class="tools" aria-label="Devices"><ui-icon name="device" style="width:16px;height:16px"></ui-icon></button>
      <button class="tools" aria-label="Mixer"><ui-icon name="faders" style="width:16px"></ui-icon></button>
      <span class="space"></span>
      <button class="right" aria-label="Browser"><ui-icon name="search"></ui-icon></button>
      <button class="right" aria-label="Project"><ui-icon name="file"></ui-icon></button>
      <button class="right" aria-label="Output"><ui-icon name="speaker" style="height:16px"></ui-icon></button>
      <button class="hand" aria-label="Mappings"><ui-icon name="hand"></ui-icon></button>
      <hr>
      <button class="last" aria-label="Keyboard"><ui-icon name="keys"></ui-icon></button>
    `)
  }
}

class DawApp extends DawElement {
  connectedCallback() {
    this.paint(`
      :host { display: flex; flex-direction: column; height: 100vh; overflow: hidden; }
    `, '<transport-bar></transport-bar><arranger-view></arranger-view><status-bar></status-bar>')
  }
}

const elements = {
  'ui-icon': UiIcon,
  'tool-group': ToolGroup,
  'tool-button': ToolButton,
  'transport-display': TransportDisplay,
  'transport-bar': TransportBar,
  'time-ruler': TimeRuler,
  'track-header': TrackHeader,
  'track-lane': TrackLane,
  'track-row': TrackRow,
  'arranger-view': ArrangerView,
  'status-bar': StatusBar,
  'daw-app': DawApp
}

for (const [name, element] of Object.entries(elements)) {
  if (!customElements.get(name)) {
    customElements.define(name, element)
  }
}
</script>
</body>
</html>
